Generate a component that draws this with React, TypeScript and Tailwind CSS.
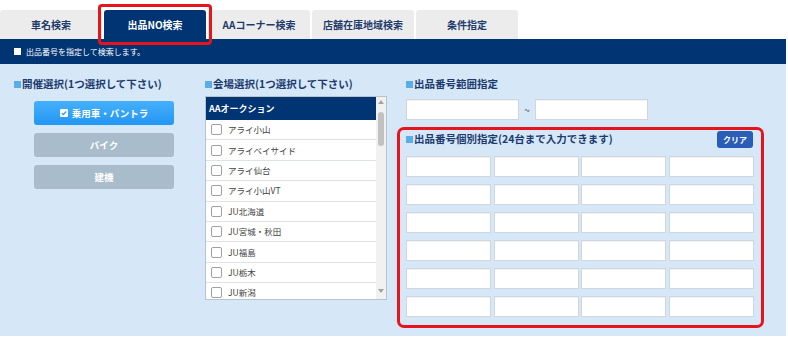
import React from "react";

const font = { fontFamily: '"Noto Sans CJK JP", "Noto Sans", sans-serif' };

const tabs = ["車名検索", "出品NO検索", "AAコーナー検索", "店舗在庫地域検索", "条件指定"];

const venues = [
    "アライ小山",
    "アライベイサイド",
    "アライ仙台",
    "アライ小山VT",
    "JU北海道",
    "JU宮城・秋田",
    "JU福島",
    "JU栃木",
    "JU新潟",
];

function Heading({ children }: { children: React.ReactNode }) {
    return (
        <div className="flex items-center h-[14px] text-[10.5px] font-bold text-[#1d3b6f] leading-none">
            <span className="w-[7px] h-[7px] bg-[#5aaee8] mr-[1px]" />
            <span>{children}</span>
        </div>
    );
}

function Field({ w }: { w: string }) {
    return <div className={`${w} h-[21px] bg-white border border-[#cfd6dd] shadow-[inset_0_1px_1px_rgba(0,0,0,0.06)]`} />;
}

export default function App() {
    return (
        <div className="w-[788px] h-[342px] bg-white overflow-hidden" style={font}>
            {/* Tabs */}
            <div className="relative flex gap-[2px] pt-[10px]">
                {tabs.map((t, i) => (
                    <div
                        key={t}
                        className={`w-[102px] h-[29px] rounded-t-[3px] flex items-center justify-center text-[10px] font-bold ${
                            i === 1 ? "bg-[#003473] text-white" : "bg-[#ececec] text-[#1f3c6c]"
                        }`}
                    >
                        {t}
                    </div>
                ))}
                <div className="absolute left-[98px] top-[4px] w-[114px] h-[41px] border-[3px] border-[#e8141c] rounded-[4px]" />
            </div>

            {/* Notice bar */}
            <div className="w-[786px] h-[25px] bg-[#003473] flex items-center pl-[14px] text-[8px] text-white">
                <span className="w-[7px] h-[7px] bg-white mr-[5px]" />
                出品番号を指定して検索します。
            </div>

            {/* Main panel */}
            <div className="w-[786px] h-[272px] bg-[#d6e8f7] flex pl-[14px] pt-[13px]">
                {/* 開催選択 */}
                <div className="w-[191px]">
                    <Heading>開催選択(1つ選択して下さい)</Heading>
                    <div className="mt-[10px] ml-[20px] flex flex-col gap-[8px]">
                        <div className="w-[140px] h-[24px] rounded-[3px] bg-gradient-to-b from-[#45b0fb] to-[#2196f3] flex items-center justify-center gap-[4px] text-white text-[9.5px] font-bold">
                            <svg width="8" height="8" viewBox="0 0 8 8">
                                <rect x="0" y="0" width="8" height="8" rx="1" fill="white" />
                                <path d="M1.8 4.1 L3.3 5.6 L6.2 2.5" stroke="#2196f3" strokeWidth="1.2" fill="none" />
                            </svg>
                            乗用車・バントラ
                        </div>
                        <div className="w-[140px] h-[24px] rounded-[3px] bg-[#a9bccb] flex items-center justify-center text-white text-[9.5px] font-bold">
                            バイク
                        </div>
                        <div className="w-[140px] h-[24px] rounded-[3px] bg-[#a9bccb] flex items-center justify-center text-white text-[9.5px] font-bold">
                            建機
                        </div>
                    </div>
                </div>

                {/* 会場選択 */}
                <div className="w-[192px]">
                    <Heading>会場選択(1つ選択して下さい)</Heading>
                    <div className="mt-[5px] w-[182px] h-[204px] border border-[#b9c3cd] bg-white flex overflow-hidden">
                        <div className="flex-1">
                            <div className="h-[23px] bg-[#003473] text-white text-[9px] font-bold flex items-center pl-[3px]">
                                AAオークション
                            </div>
                            {venues.map((v) => (
                                <div
                                    key={v}
                                    className="h-[20.4px] box-border border-b border-[#dde2e6] flex items-center pl-[5px] gap-[6px] text-[8.5px] text-[#444]"
                                >
                                    <span className="w-[11px] h-[11px] border border-[#a0a0a0] rounded-[2px] bg-white" />
                                    {v}
                                </div>
                            ))}
                        </div>
                        <div className="w-[10px] bg-[#f1f1f1] flex flex-col items-center">
                            <svg width="6" height="4" viewBox="0 0 6 4" className="mt-[3px]">
                                <path d="M0 4 L3 0 L6 4 Z" fill="#a3a3a3" />
                            </svg>
                            <div className="mt-[8px] w-[6px] h-[34px] rounded-[3px] bg-[#c1c1c1]" />
                            <svg width="6" height="4" viewBox="0 0 6 4" className="mt-auto mb-[6px]">
                                <path d="M0 0 L3 4 L6 0 Z" fill="#a3a3a3" />
                            </svg>
                        </div>
                    </div>
                </div>

                {/* 出品番号 */}
                <div className="w-[370px]">
                    <div className="pl-[9px]">
                        <Heading>出品番号範囲指定</Heading>
                        <div className="mt-[8px] flex items-center">
                            <Field w="w-[113px]" />
                            <span className="w-[16px] text-center text-[10px] text-[#555]">~</span>
                            <Field w="w-[113px]" />
                        </div>
                    </div>
                    <div className="mt-[7px] w-[367px] h-[201px] border-[3px] border-[#e8141c] rounded-[7px] pl-[6px] pt-[1px]">
                        <div className="flex items-center justify-between pr-[8px] h-[17px]">
                            <Heading>出品番号個別指定(24台まで入力できます)</Heading>
                            <div className="w-[36px] h-[17px] rounded-[3px] bg-[#2a5db5] text-white text-[8px] font-bold flex items-center justify-center">
                                クリア
                            </div>
                        </div>
                        <div className="mt-[8px] grid grid-cols-[85px_85px_85px_85px] gap-x-[2.5px] gap-y-[7px]">
                            {Array.from({ length: 24 }).map((_, i) => (
                                <Field key={i} w="w-[85px]" />
                            ))}
                        </div>
                    </div>
                </div>
            </div>
        </div>
    );
}
